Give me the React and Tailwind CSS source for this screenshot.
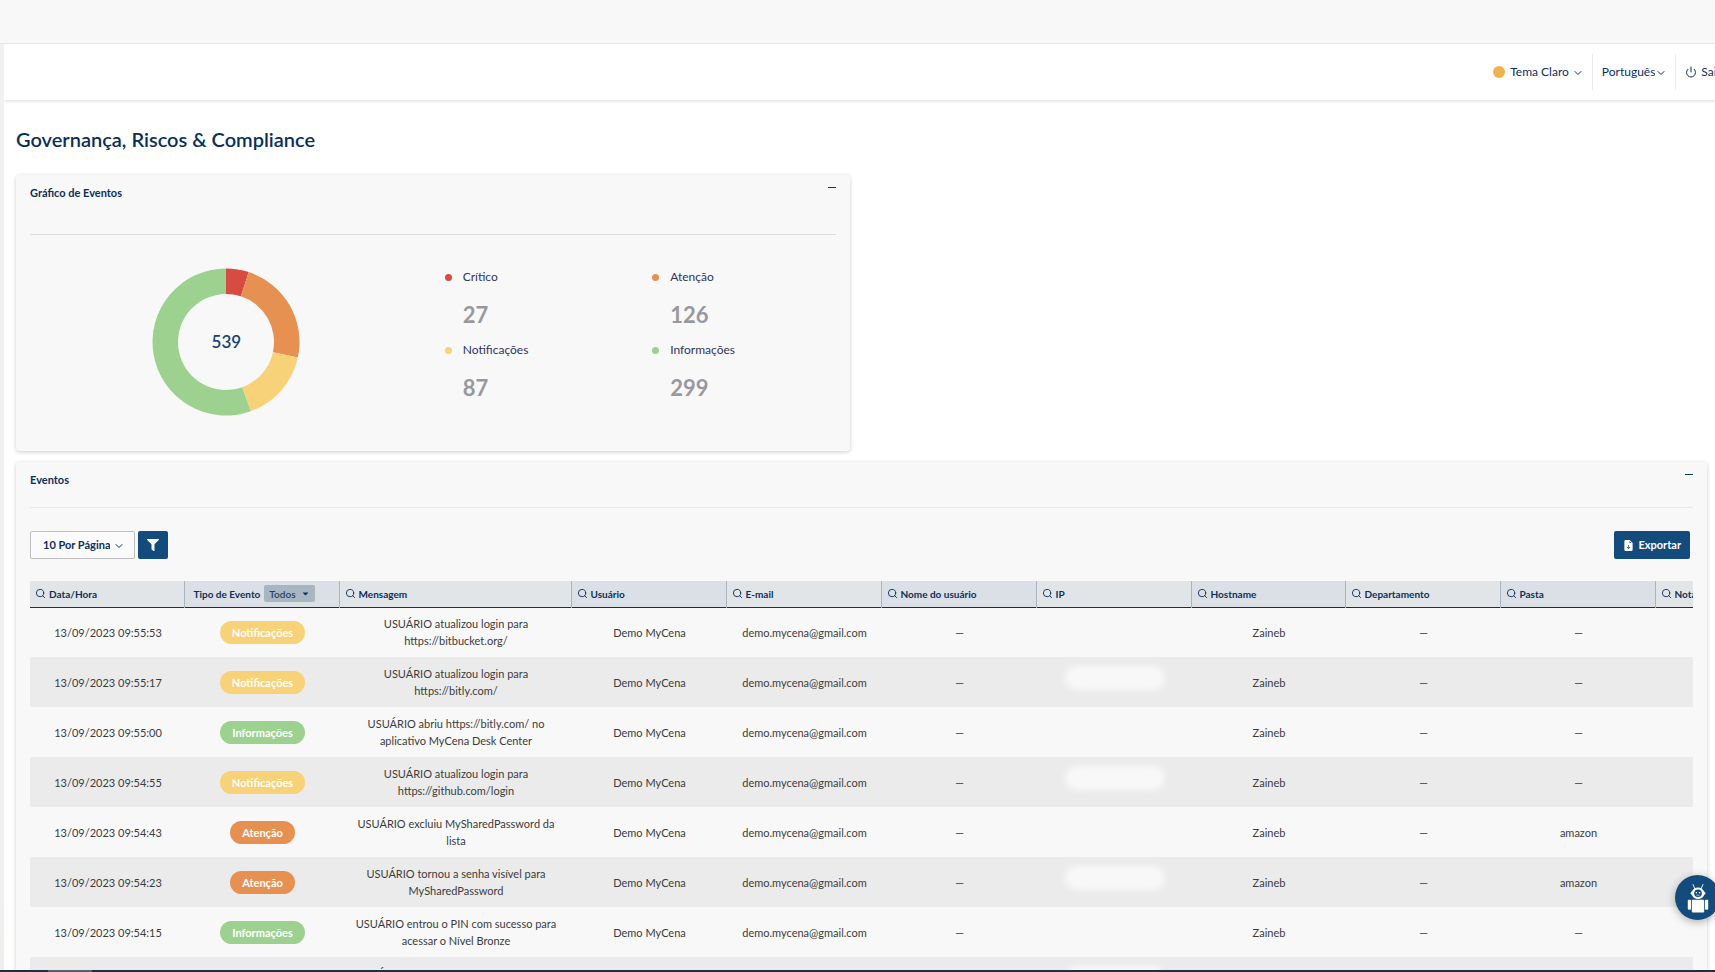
import { useState } from "react";
import { FaCaretDown, FaFilter } from "react-icons/fa";
import { BsFileEarmarkArrowDownFill } from "react-icons/bs";
import { ChevronDown, Power, Search } from "lucide-react";

const SLICES = [
  { label: "Crítico", value: 27, color: "#d64b42" },
  { label: "Atenção", value: 126, color: "#e69152" },
  { label: "Notificações", value: 87, color: "#f7d278" },
  { label: "Informações", value: 299, color: "#9dd18f" },
];

const BADGES = {
  Notificações: "bg-[#f7d278]",
  Informações: "bg-[#9dd18f]",
  Atenção: "bg-[#e69152]",
};

const COLUMNS = [
  { label: "Data/Hora", width: "w-[154px]" },
  { label: "Tipo de Evento", width: "w-[155px]", filter: true },
  { label: "Mensagem", width: "w-[232px]" },
  { label: "Usuário", width: "w-[155px]" },
  { label: "E-mail", width: "w-[155px]" },
  { label: "Nome do usuário", width: "w-[155px]" },
  { label: "IP", width: "w-[155px]" },
  { label: "Hostname", width: "w-[154px]" },
  { label: "Departamento", width: "w-[155px]" },
  { label: "Pasta", width: "w-[155px]" },
  { label: "Nota", width: "w-[155px]" },
];

const EVENTS = [
  { date: "13/09/2023 09:55:53", type: "Notificações", message: "USUÁRIO atualizou login para https://bitbucket.org/", folder: "—" },
  { date: "13/09/2023 09:55:17", type: "Notificações", message: "USUÁRIO atualizou login para https://bitly.com/", folder: "—" },
  { date: "13/09/2023 09:55:00", type: "Informações", message: "USUÁRIO abriu https://bitly.com/ no aplicativo MyCena Desk Center", folder: "—" },
  { date: "13/09/2023 09:54:55", type: "Notificações", message: "USUÁRIO atualizou login para https://github.com/login", folder: "—" },
  { date: "13/09/2023 09:54:43", type: "Atenção", message: "USUÁRIO excluiu MySharedPassword da lista", folder: "amazon" },
  { date: "13/09/2023 09:54:23", type: "Atenção", message: "USUÁRIO tornou a senha visível para MySharedPassword", folder: "amazon" },
  { date: "13/09/2023 09:54:15", type: "Informações", message: "USUÁRIO entrou o PIN com sucesso para acessar o Nível Bronze", folder: "—" },
  { date: "13/09/2023 09:54:02", type: "Informações", message: "USUÁRIO entrou o PIN com sucesso para acessar o Nível Prata", folder: "—" },
];

function slicePath(from, to, outer, inner) {
  const point = (t, r) => {
    const a = t * 2 * Math.PI - Math.PI / 2;
    return `${(r * Math.cos(a)).toFixed(2)} ${(r * Math.sin(a)).toFixed(2)}`;
  };
  const large = to - from > 0.5 ? 1 : 0;
  return `M${point(from, outer)}A${outer} ${outer} 0 ${large} 1 ${point(to, outer)}L${point(to, inner)}A${inner} ${inner} 0 ${large} 0 ${point(from, inner)}Z`;
}

function Donut() {
  const total = SLICES.reduce((sum, s) => sum + s.value, 0);
  let acc = 0;
  return (
    <div className="relative h-[148px] w-[148px]">
      <svg viewBox="-74 -74 148 148" className="h-full w-full">
        {SLICES.map((s) => {
          const from = acc / total;
          acc += s.value;
          return <path key={s.label} d={slicePath(from, acc / total, 73.5, 48)} fill={s.color} />;
        })}
      </svg>
      <span className="absolute inset-0 flex items-center justify-center text-[17px] font-semibold text-[#154472]">{total}</span>
    </div>
  );
}

function Card({ title, headerClass, ruleClass, children }) {
  const [open, setOpen] = useState(true);
  return (
    <section className="rounded bg-[#f8f8f8] px-3.5 shadow-[0_1px_4px_rgba(0,0,0,0.2)]">
      <div className={`flex items-start justify-between border-b ${headerClass} ${ruleClass}`}>
        <h2 className="pt-2.5 text-[11px] leading-4 font-bold text-[#0b2f5b]">{title}</h2>
        <button
          type="button"
          aria-label={open ? "Recolher" : "Expandir"}
          onClick={() => setOpen(!open)}
          className="flex h-6 w-2 items-center"
        >
          <span className="h-px w-full bg-[#0b3a69]" />
        </button>
      </div>
      {open && children}
    </section>
  );
}

function TopSelect({ label, options, className }) {
  return (
    <span className="relative flex items-center">
      <select
        aria-label={label}
        className={`h-9 appearance-none bg-transparent field-sizing-content text-[12px] outline-none ${className}`}
      >
        {options.map((o) => (
          <option key={o}>{o}</option>
        ))}
      </select>
      <ChevronDown size={12} className="pointer-events-none absolute right-[-2px] mt-0.5" />
    </span>
  );
}

function BotIcon() {
  return (
    <svg viewBox="0 0 22 30" className="h-[30px] w-[22px]" fill="#fff">
      <path d="M6 1.5 8 6M16 1.5 14 6" stroke="#fff" strokeWidth="0.9" strokeLinecap="round" />
      <path d="M11 4.5c3 0 5 1.600 5.800 3.600l1.900 2.200-1.900 2.200c-.8 2-2.800 3.500-5.800 3.500s-5-1.500-5.800-3.500l-1.900-2.200 1.900-2.200c.8-2 2.800-3.600 5.800-3.600Z" />
      <circle cx="11" cy="10.300" r="3.800" fill="#134b7d" />
      <circle cx="9.400" cy="9.800" r="0.800" />
      <circle cx="12.600" cy="9.800" r="0.800" />
      <path d="M9.400 12.200h3.200" stroke="#fff" strokeWidth="0.600" />
      <rect x="4.800" y="16.800" width="12.400" height="12.600" rx="1" />
      <rect x="0.800" y="16.800" width="3.200" height="10" rx="1" />
      <rect x="18" y="16.800" width="3.200" height="10" rx="1" />
    </svg>
  );
}

export default function App() {
  return (
    <div className="flex h-screen flex-col overflow-hidden bg-white font-['Lato',sans-serif] text-[#0b2f5b]">
      <div className="h-11 shrink-0 border-b border-[#e6e6e6] bg-[#f8f8f8]" />

      <div className="flex min-h-0 flex-1">
        <aside className="w-1 shrink-0 bg-linear-to-b from-[#f1f1f1] from-90% to-[#efeeea]" />

        <div className="flex min-w-0 flex-1 flex-col overflow-hidden">
          <header className="-mr-3.5 flex h-14 shrink-0 items-center justify-end shadow-[0_1px_4px_rgba(0,0,0,0.14)]">
            <div className="flex items-center gap-[5px] pr-2.5">
              <span className="h-3 w-3 rounded-full bg-[#f0b250]" />
              <TopSelect label="Tema" options={["Tema Claro", "Tema Escuro"]} className="pr-[13px]" />
            </div>
            <div className="border-x border-[#ececec] pr-2.5 pl-[9px]">
              <TopSelect label="Idioma" options={["Português", "English"]} className="pr-2.5" />
            </div>
            <button type="button" className="flex h-9 items-center gap-1 pr-2 pl-[9px] text-[12px]">
              <Power size={12} />
              Sair
            </button>
          </header>

          <main className="flex-1 pr-2 pl-3">
            <h1 className="mt-[25px] mb-[22px] text-[20px] leading-7 font-semibold">Governança, Riscos &amp; Compliance</h1>

            <div className="mb-[11px] grid grid-cols-2 gap-6">
              <Card title="Gráfico de Eventos" headerClass="h-[60px]" ruleClass="border-[#dcdcdc]">
                <div className="-mx-3 grid grid-cols-2 pt-8 pb-[35px]">
                  <div className="flex justify-center pt-px pl-0.5">
                    <Donut />
                  </div>
                  <ul className="grid grid-cols-2 content-start">
                    {SLICES.map((s) => (
                      <li key={s.label} className="h-[73px] px-3">
                        <div className="flex h-5 items-center gap-[11px] text-[12px] text-[#33335c]">
                          <span className="h-[7px] w-[7px] rounded-full" style={{ backgroundColor: s.color }} />
                          {s.label}
                        </div>
                        <p className="mt-3.5 pl-[18px] text-[22px] leading-7 font-bold text-[#98989f]">{s.value}</p>
                      </li>
                    ))}
                  </ul>
                </div>
              </Card>
            </div>

            <Card title="Eventos" headerClass="h-[46px]" ruleClass="border-[#e9e9e9]">
              <div className="flex items-center justify-between pt-[23px] pr-[3px] pb-[22px]">
                <div className="flex items-center gap-[3px]">
                  <span className="relative flex items-center">
                    <select
                      aria-label="Itens por página"
                      className="h-7 appearance-none rounded-xs border border-[#bdbdbd] bg-[#fbfbfb] field-sizing-content pr-6 pl-3 text-[11px] font-bold outline-none"
                    >
                      <option>10 Por Página</option>
                      <option>25 Por Página</option>
                      <option>50 Por Página</option>
                    </select>
                    <ChevronDown size={12} className="pointer-events-none absolute right-2.5 mt-0.5" />
                  </span>
                  <button type="button" aria-label="Filtrar" className="flex h-7 w-[30px] items-center justify-center rounded-xs bg-[#134b7d] text-white">
                    <FaFilter size={12} />
                  </button>
                </div>
                <button type="button" className="flex h-7 items-center gap-1 rounded-xs bg-[#134b7d] px-[9px] text-[11px] font-bold text-white">
                  <BsFileEarmarkArrowDownFill size={11} />
                  Exportar
                </button>
              </div>

              <div className="overflow-hidden">
                <table className="w-[1780px] table-fixed border-collapse">
                  <thead>
                    <tr className="h-[26px] border-b border-[#0b3357]">
                      {COLUMNS.map((c) => (
                        <th
                          key={c.label}
                          className={`${c.width} border-l border-[#a9b6c2] px-[5px] text-left text-[10px] leading-4 font-bold whitespace-nowrap first:border-l-0 odd:bg-[#e2e5e8] even:bg-[#dae0e5]`}
                        >
                          {c.filter ? (
                            <span className="flex items-center gap-1 pl-1">
                              {c.label}
                              <span className="relative flex items-center">
                                <select
                                  aria-label={c.label}
                                  className="h-[17px] appearance-none rounded-xs bg-[#a8b6c2] field-sizing-content pr-[19px] pl-[5px] font-semibold text-[#1d4468] outline-none"
                                >
                                  <option>Todos</option>
                                  <option>Crítico</option>
                                </select>
                                <FaCaretDown size={9} className="pointer-events-none absolute right-[5px]" />
                              </span>
                            </span>
                          ) : (
                            <span className="flex items-center gap-[3px]">
                              <Search size={11} />
                              {c.label}
                            </span>
                          )}
                        </th>
                      ))}
                    </tr>
                  </thead>
                  <tbody className="text-center text-[11px] leading-[17px] text-[#3b3b3b]">
                    {EVENTS.map((e) => (
                      <tr key={e.date} className="group h-[50px] even:bg-[#ebebeb] [&>td]:pl-0.5">
                        <td>{e.date}</td>
                        <td>
                          <span className={`inline-block rounded-full px-3 py-[3px] font-bold text-white ${BADGES[e.type]}`}>
                            {e.type}
                          </span>
                        </td>
                        <td>
                          <p className="px-2.5">{e.message}</p>
                        </td>
                        <td>Demo MyCena</td>
                        <td>demo.mycena@gmail.com</td>
                        <td>—</td>
                        <td>
                          <span className="mx-auto mb-2 block h-6 w-[100px] rounded-full bg-[#f8f8f8] blur-[3px] group-odd:invisible" />
                        </td>
                        <td>Zaineb</td>
                        <td>—</td>
                        <td>{e.folder}</td>
                        <td>—</td>
                      </tr>
                    ))}
                  </tbody>
                </table>
              </div>
            </Card>
          </main>
        </div>
      </div>

      <div className="flex h-0.5 shrink-0 bg-[#1d3144] pl-12">
        <span className="h-full w-11 bg-[#52606c]" />
      </div>

      <button
        type="button"
        aria-label="Assistente"
        className="fixed right-[-5px] bottom-[52px] flex h-[45px] w-[45px] items-center justify-center rounded-full bg-[#134b7d] shadow-[0_2px_8px_rgba(0,0,0,0.3)]"
      >
        <BotIcon />
      </button>
    </div>
  );
}
